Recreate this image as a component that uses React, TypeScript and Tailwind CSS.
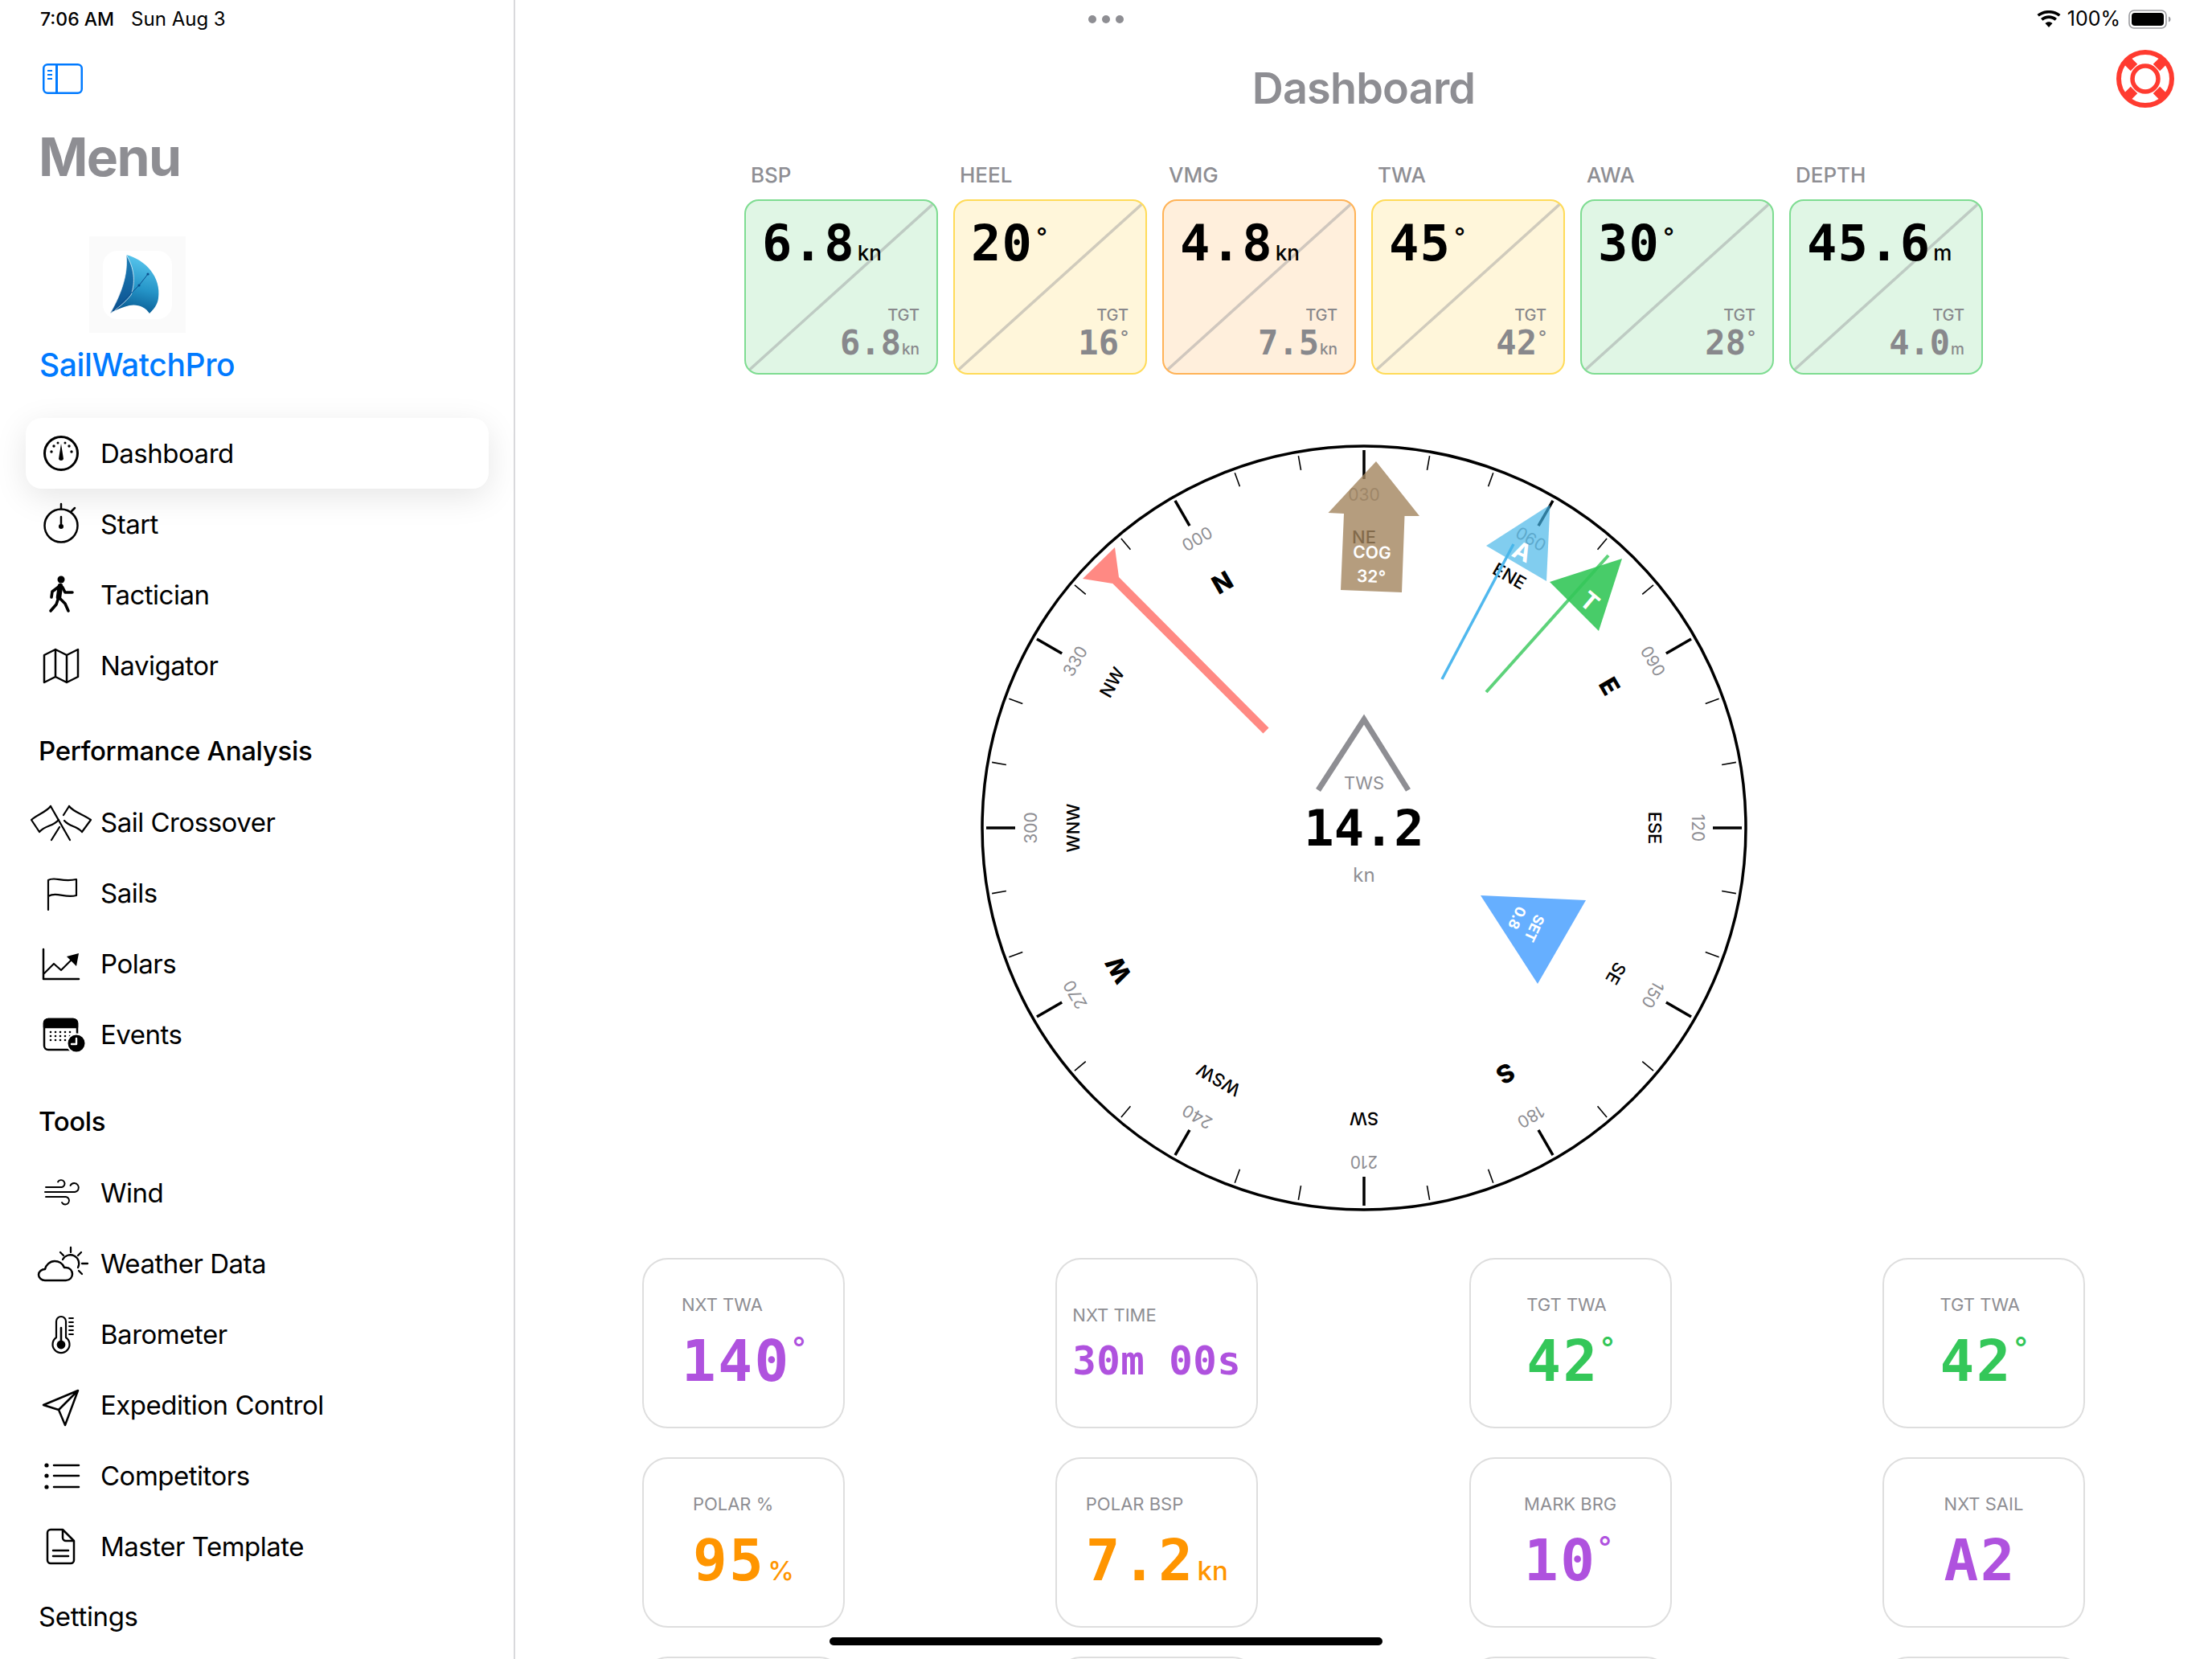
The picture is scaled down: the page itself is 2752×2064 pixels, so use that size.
import React from 'react';

const mono = "font-['DejaVu_Sans_Mono',monospace]";

// every nav icon sits in a 90x60 box, centred on the icon column
function Ic({ children }: { children: React.ReactNode }) {
  return (
    <svg width="90" height="60" viewBox="0 0 90 60" fill="none" stroke="#000" strokeWidth="2.5" strokeLinecap="round" strokeLinejoin="round" className="overflow-visible">
      {children}
    </svg>
  );
}

const icons: Record<string, React.ReactNode> = {
  Dashboard: (
    <Ic>
      <circle cx="45" cy="30" r="20.5" strokeWidth="3" />
      <path d="M45 18 L48 37 A3.2 3.2 0 0 1 42 37 Z" fill="#000" stroke="none" />
      <g fill="#000" stroke="none">
        <circle cx="33" cy="28" r="1.7" /><circle cx="36" cy="21" r="1.7" />
        <circle cx="41" cy="17" r="1.5" /><circle cx="50" cy="17" r="1.5" /><circle cx="55" cy="21" r="1.7" /><circle cx="58" cy="28" r="1.7" />
      </g>
    </Ic>
  ),
  Start: (
    <Ic>
      <circle cx="45" cy="32" r="20.5" />
      <path d="M45 11 V5 M58 14 L62 10 M45 21 V33" />
      <circle cx="45" cy="33" r="3" fill="#000" stroke="none" />
    </Ic>
  ),
  Tactician: (
    <Ic>
      <circle cx="45" cy="11" r="4.5" fill="#000" stroke="none" />
      <path d="M44 19 L42 33" strokeWidth="6.5" />
      <path d="M42 20 L34 26 L33 33 M47 21 L50 27 L59 27 M42 33 L39 42 L32 50 M42 33 L50 41 L54 50" strokeWidth="3.6" />
    </Ic>
  ),
  Navigator: (
    <Ic>
      <path d="M24 17 L38 10 L52 17 L66 10 L66 44 L52 51 L38 44 L24 51 Z M38 10 V44 M52 17 V51" />
    </Ic>
  ),
  'Sail Crossover': (
    <Ic>
      <path d="M32 10 L56 52 M33 52 L43 36 M55 10 L48 21" strokeWidth="2.2" />
      <path d="M32 10 C27 17 16 20 8 27 L18 42 C26 33 34 36 42 27 M55 10 C60 17 72 20 82 27 L71 42 C64 34 56 36 49 28" strokeWidth="2.2" />
    </Ic>
  ),
  Sails: (
    <Ic>
      <path d="M29 51 V14 C37 9 46 17 64 13 V33 C50 37 40 28 29 34" strokeWidth="2.2" />
    </Ic>
  ),
  Polars: (
    <Ic>
      <path d="M23 12 V49 H67" />
      <path d="M24 42 L36 30 L45 38 L58 25" strokeWidth="2.2" />
      <path d="M67 17 L52 21 L64 33 Z" fill="#000" stroke="none" />
    </Ic>
  ),
  Events: (
    <Ic>
      <rect x="24" y="11" width="41" height="38" rx="5" />
      <path d="M24 16 a5 5 0 0 1 5 -5 h31 a5 5 0 0 1 5 5 v5 h-41 z" fill="#000" />
      <g fill="#000" stroke="none">
        {[27, 32, 37].flatMap(y => [32, 38, 44, 50, 56].map(x => <circle key={`${x}-${y}`} cx={x} cy={y} r="1.3" />))}
      </g>
      <circle cx="64" cy="41" r="11.5" fill="#000" stroke="#fff" strokeWidth="2" />
      <path d="M64 35 V42 H58" stroke="#fff" strokeWidth="2.4" />
    </Ic>
  ),
  Wind: (
    <Ic>
      <path d="M26 23 H46 a4.5 4.5 0 1 0 -5 -6.5 M25 29 H62 a5.5 5.5 0 1 0 -5.5 -8 M26 35 H51 a4.8 4.8 0 1 1 -5 7" strokeWidth="1.9" />
    </Ic>
  ),
  'Weather Data': (
    <Ic>
      <path d="M25 51 h26 c5 0 8 -4 8 -8 c0 -4 -3 -8 -8 -8 h-2 c-2 -5 -7 -8 -12 -8 c-6 0 -11 5 -12 10 c-4 0 -8 3 -8 7 c0 4 4 7 8 7 z" />
      <path d="M47 25 A10 10 0 0 1 66 35 M57 10 V16 M44 16 L48 20 M70 16 L66 20 M71 30 H78 M67 39 L71 43" strokeWidth="2.3" />
    </Ic>
  ),
  Barometer: (
    <Ic>
      <path d="M39 34 V14 a6 6 0 0 1 12 0 V34 a10.5 10.5 0 1 1 -12 0 Z" strokeWidth="2.2" />
      <path d="M45 22 V40" strokeWidth="2.6" />
      <circle cx="45" cy="43" r="5.4" fill="#000" stroke="none" />
      <path d="M55 10 H60 M55 15 H60 M55 20 H60 M55 25 H60 M55 30 H60" strokeWidth="1.8" />
    </Ic>
  ),
  'Expedition Control': (
    <Ic>
      <path d="M23 30 L66 12 L50 55 L42 36 Z M42 36 L66 12" />
    </Ic>
  ),
  Competitors: (
    <Ic>
      <path d="M36 17 H67 M36 30 H67 M36 44 H67" />
      <g fill="#000" stroke="none"><circle cx="27" cy="17" r="2.6" /><circle cx="27" cy="30" r="2.6" /><circle cx="27" cy="44" r="2.6" /></g>
    </Ic>
  ),
  'Master Template': (
    <Ic>
      <path d="M32 9 H47 L61 23 V47 a4 4 0 0 1 -4 4 H32 a4 4 0 0 1 -4 -4 V13 a4 4 0 0 1 4 -4 Z M47 9 V19 a4 4 0 0 0 4 4 H61 M35 35 H54 M35 42 H54" />
    </Ic>
  ),
};

function NavRow({ label, active }: { label: string; active?: boolean }) {
  return (
    <div className={`ml-[32px] w-[576px] h-[88px] shrink-0 flex items-center rounded-[20px] ${active ? 'bg-white shadow-[0_10px_40px_rgba(0,0,0,0.1)]' : ''}`}>
      <div className="w-[88px] flex justify-center">{icons[label]}</div>
      <span className="ml-[5px] text-[33px] tracking-[-0.015em] text-black leading-none">{label}</span>
    </div>
  );
}

function SectionHead({ label, className }: { label: string; className?: string }) {
  return <div className={`h-[88px] shrink-0 flex items-center pl-[48px] text-[33px] tracking-[-0.01em] font-medium text-black ${className ?? ''}`}>{label}</div>;
}

function SailLogo() {
  return (
    <div className="ml-[111px] mt-[59px] w-[120px] h-[120px] bg-[#fafafa] flex items-center justify-center">
      <div className="w-[86px] h-[85px] rounded-[18px] bg-white flex items-center justify-center">
        <svg width="66" height="78" viewBox="24 20 66 78" className="mr-[7px]">
          <defs>
            <linearGradient id="mainSail" x1="0.6" y1="0" x2="0.4" y2="1">
              <stop offset="0" stopColor="#5ac8ef" />
              <stop offset="0.55" stopColor="#2595c8" />
              <stop offset="1" stopColor="#06568f" />
            </linearGradient>
            <linearGradient id="jibSail" x1="0.5" y1="0" x2="0.5" y2="1">
              <stop offset="0" stopColor="#1c7fb8" />
              <stop offset="1" stopColor="#0b4f8e" />
            </linearGradient>
          </defs>
          <path d="M46 22 C70 28 90 50 86 76 C85 84 80 90 75 95 C70 87 60 83 50 85 C42 87 33 90 26 95 C38 76 52 50 46 22 Z" fill="url(#mainSail)" />
          <path d="M46 22 C49 48 38 74 26 95 C36 88 44 82 52 72 C58 56 56 38 46 22 Z" fill="url(#jibSail)" stroke="#fff" strokeWidth="0.7" />
          <path d="M30 92 L50 72 L62 60 L73 46" fill="none" stroke="#0b4f8e" strokeWidth="1" />
          <circle cx="62" cy="60" r="1.6" fill="#0b4f8e" />
          <circle cx="73" cy="46" r="1.6" fill="#0b4f8e" />
        </svg>
      </div>
    </div>
  );
}

function Sidebar() {
  return (
    <aside className="w-[641px] h-full shrink-0 border-r-2 border-[#d9d9dc] flex flex-col overflow-hidden">
      <div className="h-[48px] shrink-0 flex items-center pl-[50px] gap-[21px] text-black">
        <span className="text-[23px] font-medium">7:06 AM</span>
        <span className="text-[24px]">Sun Aug 3</span>
      </div>
      <div className="ml-[53px] mt-[31px]">
        <svg width="50" height="38" viewBox="0 0 50 38" fill="none" stroke="#007AFF" strokeWidth="2.5">
          <rect x="1.25" y="1.25" width="47.5" height="35.5" rx="5" />
          <path d="M17.5 1 V37" strokeWidth="3" />
          <path d="M6 9 H12 M6 14 H12 M6 19 H12" strokeWidth="2" />
        </svg>
      </div>
      <div className="ml-[48px] mt-[38px] h-[80px] flex items-center text-[66px] tracking-[-0.025em] font-bold text-[#8e8e93] leading-none">Menu</div>
      <SailLogo />
      <div className="ml-[49px] mt-[15px] h-[50px] flex items-center text-[39px] tracking-[-0.01em] font-medium text-[#007AFF]">SailWatchPro</div>
      <div className="mt-[41px] flex flex-col">
        <NavRow label="Dashboard" active />
        <NavRow label="Start" />
        <NavRow label="Tactician" />
        <NavRow label="Navigator" />
        <SectionHead label="Performance Analysis" className="mt-[19px]" />
        <NavRow label="Sail Crossover" />
        <NavRow label="Sails" />
        <NavRow label="Polars" />
        <NavRow label="Events" />
        <SectionHead label="Tools" className="mt-[21px]" />
        <NavRow label="Wind" />
        <NavRow label="Weather Data" />
        <NavRow label="Barometer" />
        <NavRow label="Expedition Control" />
        <NavRow label="Competitors" />
        <NavRow label="Master Template" />
        <div className="h-[88px] shrink-0 flex items-center pl-[48px] text-[33px] tracking-[-0.01em] text-black">Settings</div>
      </div>
    </aside>
  );
}

type Tone = 'green' | 'yellow' | 'orange';
const toneClass: Record<Tone, string> = {
  green: 'bg-[#e0f6e5] border-[#7edc91]',
  yellow: 'bg-[#fff6da] border-[#ffdb58]',
  orange: 'bg-[#ffefdc] border-[#ffb357]',
};

const topCards: { label: string; value: string; unit: string; tgt: string; tone: Tone }[] = [
  { label: 'BSP', value: '6.8', unit: 'kn', tgt: '6.8', tone: 'green' },
  { label: 'HEEL', value: '20', unit: '°', tgt: '16', tone: 'yellow' },
  { label: 'VMG', value: '4.8', unit: 'kn', tgt: '7.5', tone: 'orange' },
  { label: 'TWA', value: '45', unit: '°', tgt: '42', tone: 'yellow' },
  { label: 'AWA', value: '30', unit: '°', tgt: '28', tone: 'green' },
  { label: 'DEPTH', value: '45.6', unit: 'm', tgt: '4.0', tone: 'green' },
];

function TopCard({ label, value, unit, tgt, tone }: (typeof topCards)[number]) {
  return (
    <div className="w-[241px] flex flex-col">
      <div className="h-[28px] pl-[8px] text-[26px] leading-[28px] font-medium text-[#8e8e93]">{label}</div>
      <div className={`mt-[16px] h-[218px] rounded-[18px] border-2 relative overflow-hidden flex flex-col justify-between pl-[20px] pr-[21px] pt-[26px] pb-[18px] ${toneClass[tone]}`}>
        <svg className="absolute inset-0 w-full h-full" viewBox="0 0 100 100" preserveAspectRatio="none">
          <line x1="0" y1="100" x2="100" y2="0" stroke="#8e8e93" strokeOpacity="0.42" strokeWidth="3.5" vectorEffect="non-scaling-stroke" />
        </svg>
        <div className="relative flex items-baseline text-black">
          <span className={`${mono} font-bold text-[62px] tracking-[0.02em] leading-[54px]`}>{value}</span>
          {unit === '°'
            ? <span className="text-[30px] font-medium leading-none self-start ml-[4px] mt-[3px]">°</span>
            : <span className="text-[26px] font-medium leading-none ml-[3px]">{unit}</span>}
        </div>
        <div className="relative flex flex-col items-end text-[#88888c]">
          <span className="text-[20px] font-medium leading-[24px]">TGT</span>
          <div className="flex items-baseline mt-[4px]">
            <span className={`${mono} font-bold text-[42px] leading-[38px]`}>{tgt}</span>
            {unit === '°'
              ? <span className="text-[22px] font-medium leading-none self-start ml-[2px]">°</span>
              : <span className="text-[19px] font-medium leading-none ml-[1px]">{unit}</span>}
          </div>
        </div>
      </div>
    </div>
  );
}

const compassPoints = ['NE', 'ENE', 'E', 'ESE', 'SE', 'S', 'SW', 'WSW', 'W', 'WNW', 'NW', 'N'];

function Compass() {
  const ticks = Array.from({ length: 36 }, (_, i) => i * 10);
  return (
    <svg width="960" height="960" viewBox="-480 -480 960 960" className="mt-[84px] shrink-0">
      <circle cx="0" cy="0" r="475" fill="none" stroke="#000" strokeWidth="3.5" />
      {ticks.map(a => (
        <line
          key={a}
          x1="0"
          x2="0"
          y1={-470}
          y2={a % 30 === 0 ? -434 : -452}
          stroke="#000"
          strokeWidth={a % 30 === 0 ? 3.5 : 1.6}
          transform={`rotate(${a})`}
        />
      ))}
      {compassPoints.map((p, i) => {
        const a = i * 30;
        const deg = String((30 + a) % 360).padStart(3, '0');
        const cardinal = p.length === 1;
        return (
          <g key={p} transform={`rotate(${a})`}>
            <text y={-415} textAnchor="middle" dominantBaseline="central" fontSize="21" fill="#8e8e93">{deg}</text>
            <text y={cardinal ? -353 : -362} textAnchor="middle" dominantBaseline="central" fontSize={cardinal ? 31 : 22} fontWeight={cardinal ? 800 : 500} fill="#000">{p}</text>
          </g>
        );
      })}

      {/* course over ground */}
      <polygon points="15,-456 -44.5,-392 -25,-391 -29,-296 47,-293 50.5,-388 69,-388" fill="#A2845E" fillOpacity="0.8" />
      <text x="10" y="-343" transform="rotate(2 10 -343)" textAnchor="middle" dominantBaseline="central" fontSize="21" fontWeight="600" fill="#fff">COG</text>
      <text x="9" y="-313" transform="rotate(2 9 -313)" textAnchor="middle" dominantBaseline="central" fontSize="21" fontWeight="600" fill="#fff">32°</text>

      {/* apparent wind */}
      <line x1="186" y1="-353" x2="97" y2="-185" stroke="#50b8ee" strokeWidth="3.5" />
      <polygon points="231.5,-402 152,-351 227,-307" fill="#46b5e8" fillOpacity="0.68" />
      <text x="197" y="-344" transform="rotate(25 197 -344)" textAnchor="middle" dominantBaseline="central" fontSize="30" fontWeight="700" fill="#fff">A</text>

      {/* true wind */}
      <line x1="304" y1="-339" x2="152" y2="-169" stroke="#34C759" strokeOpacity="0.8" strokeWidth="4" />
      <polygon points="321,-335 231,-306 292,-245" fill="#34C759" fillOpacity="0.9" />
      <text x="281" y="-282" transform="rotate(40 281 -282)" textAnchor="middle" dominantBaseline="central" fontSize="30" fontWeight="700" fill="#fff">T</text>

      {/* mark bearing */}
      <polygon points="-125.5,-117.5 -312.7,-304 -350,-310 -310,-349 -305,-312 -118.5,-124.5" fill="#FF3B30" fillOpacity="0.6" />

      {/* current */}
      <polygon points="145,84 276,90 216,194" fill="#007AFF" fillOpacity="0.6" />
      <text x="212" y="125" transform="rotate(115 212 125)" textAnchor="middle" dominantBaseline="central" fontSize="18" fontWeight="700" fill="#fff">SET</text>
      <text x="190.5" y="112" transform="rotate(115 190.5 112)" textAnchor="middle" dominantBaseline="central" fontSize="18" fontWeight="700" fill="#fff">0.8</text>

      {/* true wind speed */}
      <polyline points="-57,-47 0,-135 55,-47" fill="none" stroke="#8e8e93" strokeWidth="7" />
      <text x="0" y="-56" textAnchor="middle" dominantBaseline="central" fontSize="22" fill="#8e8e93">TWS</text>
      <text x="0" y="0" textAnchor="middle" dominantBaseline="central" fontSize="62" fontWeight="700" fill="#000" className={mono}>14.2</text>
      <text x="0" y="58" textAnchor="middle" dominantBaseline="central" fontSize="24" fill="#8e8e93">kn</text>
    </svg>
  );
}

type Stat = { label: string; value: string; unit?: string; color: string; small?: boolean };
const purple = 'text-[#AF52DE]';
const green = 'text-[#34C759]';
const orange = 'text-[#FF9500]';
const stats: Stat[] = [
  { label: 'NXT TWA', value: '140', unit: '°', color: purple },
  { label: 'NXT TIME', value: '30m 00s', color: purple, small: true },
  { label: 'TGT TWA', value: '42', unit: '°', color: green },
  { label: 'TGT TWA', value: '42', unit: '°', color: green },
  { label: 'POLAR %', value: '95', unit: '%', color: orange },
  { label: 'POLAR BSP', value: '7.2', unit: 'kn', color: orange },
  { label: 'MARK BRG', value: '10', unit: '°', color: purple },
  { label: 'NXT SAIL', value: 'A2', color: purple },
];

function StatCard({ stat }: { stat?: Stat }) {
  return (
    <div className="w-[252px] h-[212px] shrink-0 rounded-[32px] border-2 border-[#dedede] flex items-center justify-center">
      {stat && (
        <div className="flex flex-col items-start pt-[2px]">
          <span className="h-[20px] text-[22px] leading-[20px] text-[#8e8e93] whitespace-nowrap">{stat.label}</span>
          <div className={`mt-[24px] flex items-baseline ${stat.color}`}>
            <span className={`${mono} font-bold whitespace-pre ${stat.small ? 'text-[49px] leading-[48px] tracking-[0.01em]' : 'text-[71px] leading-[74px] tracking-[0.035em]'}`}>{stat.value}</span>
            {stat.unit === '°' && <span className="self-start text-[36px] leading-none font-medium ml-[2px] mt-[1px]">°</span>}
            {stat.unit && stat.unit !== '°' && <span className="text-[33px] leading-none font-medium ml-[3px]">{stat.unit}</span>}
          </div>
        </div>
      )}
    </div>
  );
}

function Lifebuoy() {
  return (
    <svg width="72" height="72" viewBox="-36 -36 72 72" fill="none" stroke="#FF3B30" className="absolute right-[47px] top-[62px]">
      <circle r="33" strokeWidth="6" />
      <circle r="16" strokeWidth="5.5" />
      <path d="M-14 -14 L-24 -24 M14 -14 L24 -24 M-14 14 L-24 24 M14 14 L24 24" strokeWidth="12" />
    </svg>
  );
}

function StatusRight() {
  return (
    <div className="absolute right-[50px] top-0 h-[48px] flex items-center text-[25px] text-black">
      <svg width="30" height="22" viewBox="0 0 30 22" className="mr-[8px]">
        <path d="M15 21 L10.5 16 C13 13.8 17 13.8 19.5 16 Z M7.5 12.8 L5 10 C10.5 5 19.5 5 25 10 L22.5 12.8 C18 9 12 9 7.5 12.8 Z M2.8 7.6 L0.5 5 C8.5 -1.8 21.5 -1.8 29.5 5 L27.2 7.6 C20.5 2 9.500 2 2.8 7.6 Z" fill="#000" />
      </svg>
      <span>100%</span>
      <svg width="54" height="24" viewBox="0 0 54 24" className="ml-[10px]">
        <rect x="1" y="1" width="46" height="22" rx="6" fill="none" stroke="#9a9a9e" strokeWidth="1.6" />
        <rect x="4" y="4" width="40" height="16" rx="4" fill="#000" />
        <path d="M50 8.500 C52 9.500 52.500 10.500 52.500 12 C52.500 13.500 52 14.500 50 15.500 Z" fill="#9a9a9e" />
      </svg>
    </div>
  );
}

export default function App() {
  return (
    <div className="relative w-[2752px] h-[2064px] overflow-hidden bg-white flex font-['Inter','Noto_Sans',sans-serif]">
      <Sidebar />
      <main className="relative flex-1 h-full flex flex-col items-center">
        <StatusRight />
        <Lifebuoy />
        <div className="h-[48px] shrink-0">
          <div className="absolute left-[713px] top-[19px] flex gap-[7px]">
            <span className="w-[10px] h-[10px] rounded-full bg-[#8e8e93]" />
            <span className="w-[10px] h-[10px] rounded-full bg-[#8e8e93]" />
            <span className="w-[10px] h-[10px] rounded-full bg-[#8e8e93]" />
          </div>
        </div>
        <h1 className="h-[122px] shrink-0 flex items-center text-[54px] tracking-[-0.015em] font-semibold text-[#8e8e93]">Dashboard</h1>
        <div className="mt-[34px] flex gap-[19px]">
          {topCards.map(c => <TopCard key={c.label} {...c} />)}
        </div>
        <Compass />
        <div className="mt-[55px] w-[1795px] grid grid-cols-[repeat(4,252px)] justify-between gap-y-[36px]">
          {stats.map((s, i) => <StatCard key={i} stat={s} />)}
          <StatCard />
          <StatCard />
          <StatCard />
          <StatCard />
        </div>
      </main>
      <div className="absolute left-[1032px] top-[2037px] w-[688px] h-[10px] rounded-full bg-black" />
    </div>
  );
}
